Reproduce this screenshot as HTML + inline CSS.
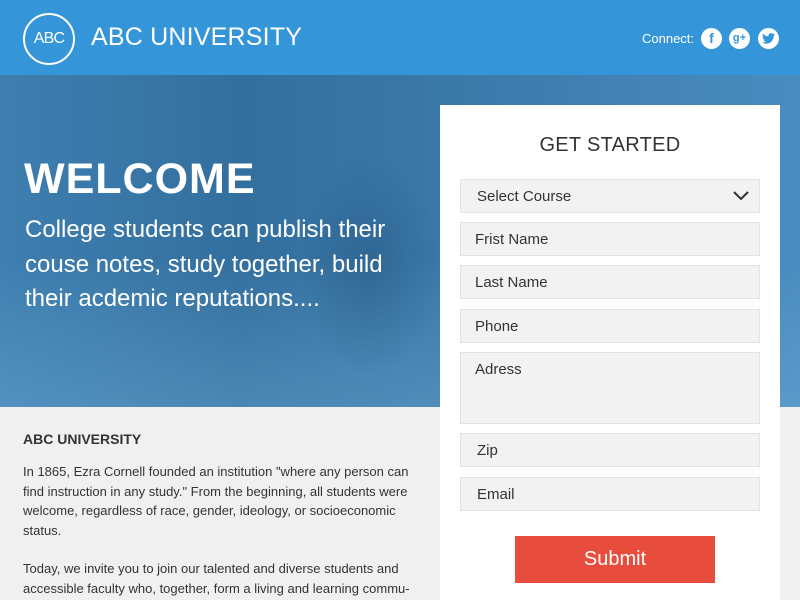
<!DOCTYPE html>
<html><head><style>
*{margin:0;padding:0;box-sizing:border-box}
html,body{width:800px;height:600px;overflow:hidden}
body{font-family:"Liberation Sans",sans-serif;background:#f0f0f0;position:relative}
.hdr{position:absolute;left:0;top:0;width:800px;height:75px;background:#3595d9}
.logo{position:absolute;left:23px;top:13px;width:52px;height:52px;border:2px solid #fff;border-radius:50%;color:#fff;font-size:16px;text-align:center;line-height:48px;letter-spacing:-0.8px}
.brand{position:absolute;left:91px;top:23px;color:#fff;font-size:25px;letter-spacing:0.2px}
.conn{position:absolute;left:642px;top:31px;color:#fff;font-size:13px}
.ic{position:absolute;top:28px;width:21px;height:21px;border-radius:50%;background:#fff;color:#3595d9;font-weight:bold;text-align:center;line-height:21px;font-size:14px}
.hero{position:absolute;left:0;top:75px;width:800px;height:332px;background:
radial-gradient(ellipse 70px 110px at 370px 190px,rgba(30,70,110,.3) 0%,rgba(30,70,110,0) 100%),
linear-gradient(180deg,rgba(0,0,0,0) 55%,rgba(120,180,220,.35) 100%),
linear-gradient(90deg,#3e7fb0 0%,#336f9e 30%,#3a78a8 55%,#4a8cc0 100%)}
.hero h1{position:absolute;left:24px;top:80px;color:#fff;font-size:43px;font-weight:bold;letter-spacing:1px}
.hero p{position:absolute;left:25px;top:138px;width:410px;color:#fff;font-size:24px;line-height:34.5px}
.about{position:absolute;left:23px;top:431px;width:395px;color:#333}
.about h3{font-size:14px;font-weight:bold;margin-bottom:15px}
.about p{font-size:13px;line-height:19.5px;margin-bottom:19px}
.card{position:absolute;left:440px;top:105px;width:340px;height:495px;background:#fff}
.card h2{position:absolute;top:29px;width:100%;text-align:center;font-weight:normal;font-size:20px;color:#333;letter-spacing:0.3px}
.f{position:absolute;left:20px;width:300px;height:34px;background:#f2f2f2;border:1px solid #e3e3e3;font-size:15px;color:#333;padding:8px 0 0 14px}
.btn{position:absolute;left:75px;top:431px;width:200px;height:47px;background:#e74c3c;color:#fff;font-size:20px;text-align:center;line-height:47px}
</style></head><body>
<div class="hdr">
<div class="logo">ABC</div>
<div class="brand">ABC UNIVERSITY</div>
<div class="conn">Connect:</div>
<div class="ic" style="left:701px">f</div>
<div class="ic" style="left:729px;font-size:11px">g+</div>
<div class="ic" style="left:758px"><svg width="13" height="11" viewBox="0 0 24 20" style="margin-top:5px"><path fill="#3595d9" d="M24 2.4c-.9.4-1.8.6-2.8.8 1-.6 1.8-1.6 2.2-2.7-1 .6-2 1-3.1 1.2C19.4.7 18.1 0 16.6 0c-2.7 0-4.9 2.2-4.9 4.9 0 .4 0 .8.1 1.1C7.7 5.8 4.1 3.9 1.7.9c-.4.7-.7 1.6-.7 2.5 0 1.7.9 3.2 2.2 4.1-.8 0-1.6-.2-2.2-.6v.1c0 2.4 1.7 4.4 3.9 4.8-.4.1-.8.2-1.3.2-.3 0-.6 0-.9-.1.6 2 2.4 3.4 4.6 3.4-1.7 1.3-3.8 2.1-6.1 2.1-.4 0-.8 0-1.2-.1 2.2 1.4 4.8 2.2 7.5 2.2 9.1 0 14-7.5 14-14v-.6c1-.7 1.8-1.6 2.5-2.5z"/></svg></div>
</div>
<div class="hero">
<h1>WELCOME</h1>
<p>College students can publish their couse notes, study together, build their acdemic reputations....</p>
</div>
<div class="about">
<h3>ABC UNIVERSITY</h3>
<p>In 1865, Ezra Cornell founded an institution "where any person can find instruction in any study." From the beginning, all students were welcome, regardless of race, gender, ideology, or socioeconomic status.</p>
<p>Today, we invite you to join our talented and diverse students and accessible faculty who, together, form a living and learning commu-</p>
</div>
<div class="card">
<h2>GET STARTED</h2>
<div class="f" style="top:74px;padding-left:16px">Select Course<svg style="position:absolute;right:10px;top:11px" width="16" height="10" viewBox="0 0 16 10"><path d="M1 1l7 7 7-7" stroke="#333" stroke-width="2" fill="none"/></svg></div>
<div class="f" style="top:117px">Frist Name</div>
<div class="f" style="top:160px">Last Name</div>
<div class="f" style="top:204px">Phone</div>
<div class="f" style="top:247px;height:72px">Adress</div>
<div class="f" style="top:328px;padding-left:16px">Zip</div>
<div class="f" style="top:372px;padding-left:16px">Email</div>
<div class="btn">Submit</div>
</div>
</body></html>
